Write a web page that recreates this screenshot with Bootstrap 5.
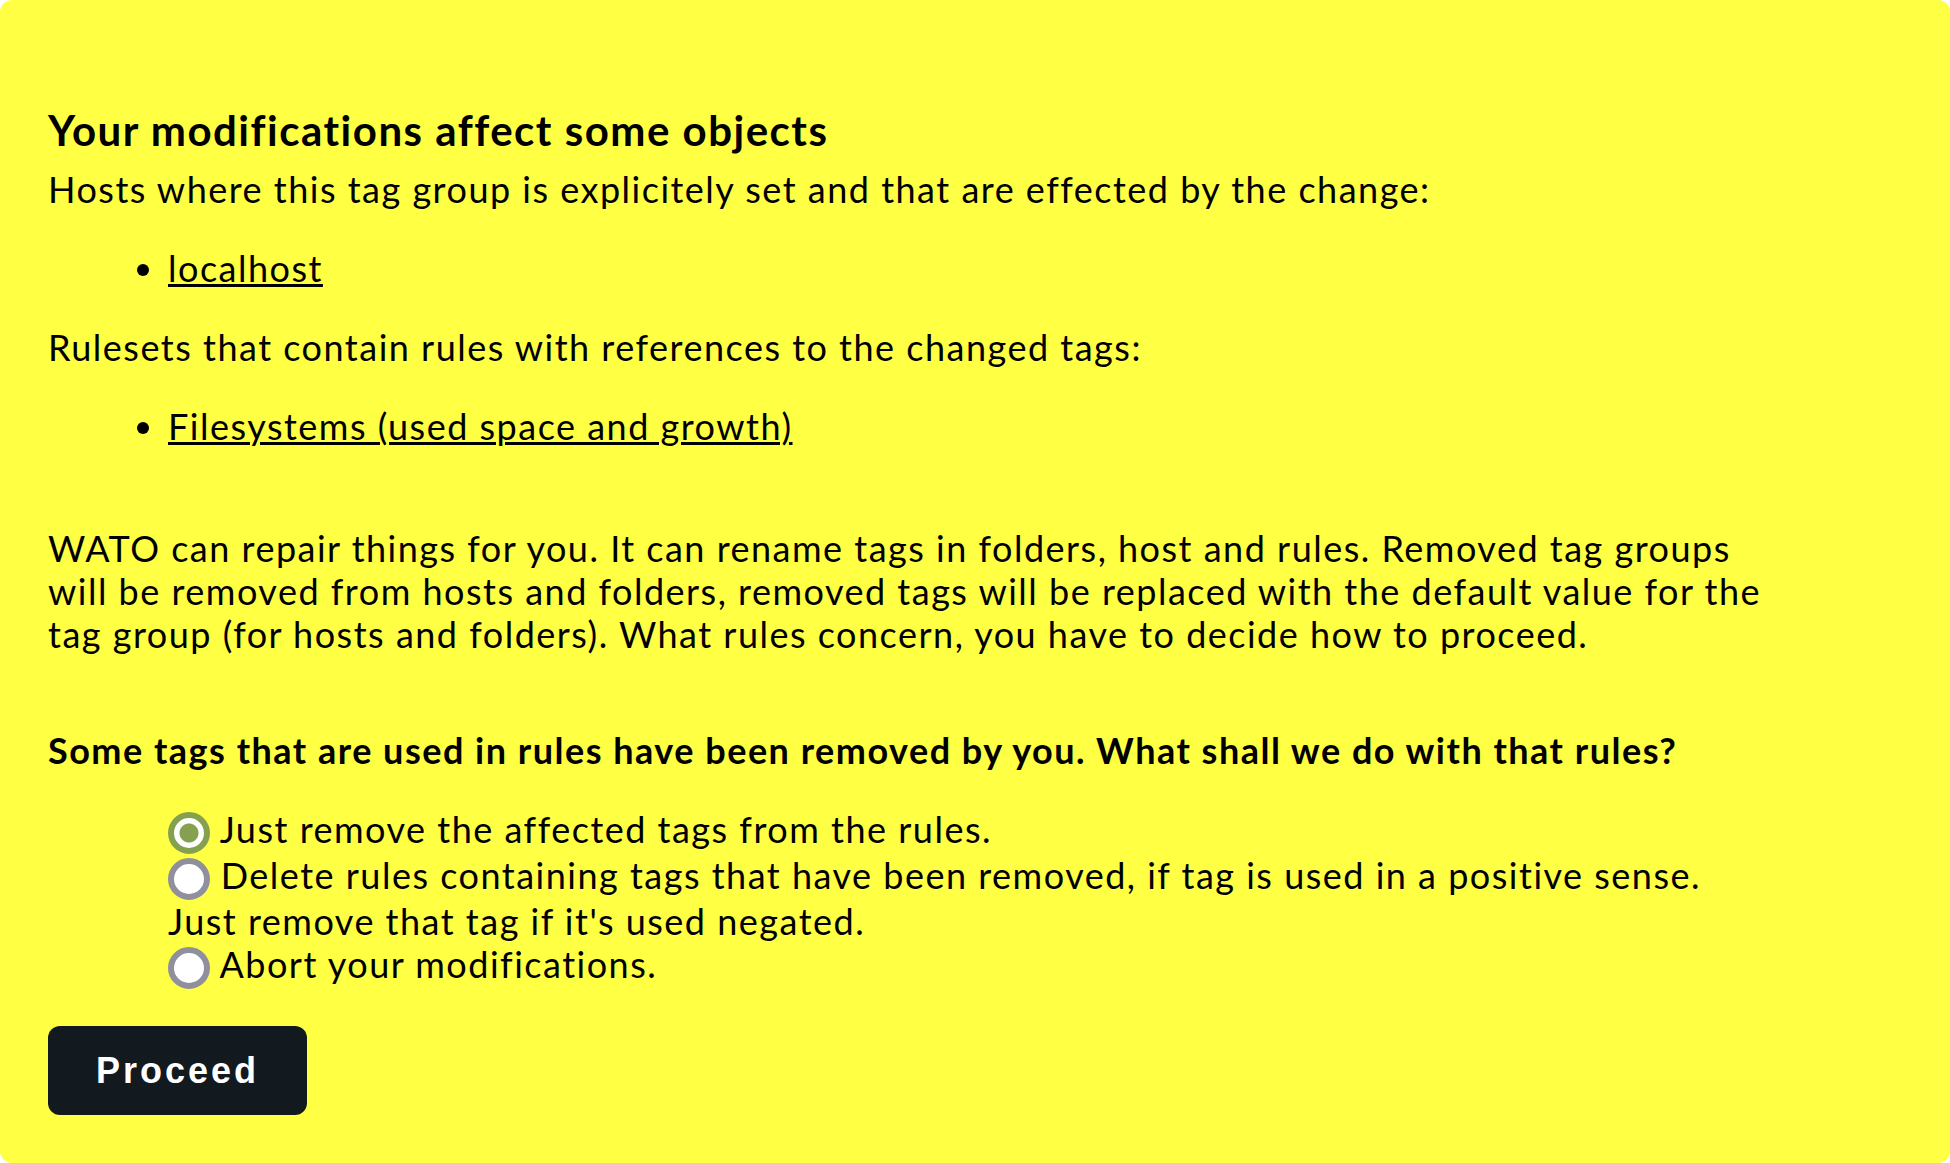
<!DOCTYPE html>
<html lang="en">
<head>
<meta charset="utf-8">
<meta name="viewport" content="width=device-width, initial-scale=1">
<title>Your modifications affect some objects</title>
<link rel="stylesheet" href="https://cdn.jsdelivr.net/npm/bootstrap@5.3.0/dist/css/bootstrap.min.css">
<style>
body { font-family: Lato, "Liberation Sans", sans-serif; font-size: 36px; line-height: 43px; letter-spacing: .0415em; color: #000; background: #fff; }
.notice { background: #ffff44; border-radius: 12px; padding: 106px 180px 48px 48px; min-height: 100vh; }
.notice h1 { font-size: 42px; line-height: 48px; font-weight: 700; margin: 0 0 14px; }
.notice p { margin: 0 0 36px; }
.notice ul { padding-left: 120px; margin: 0 0 36px; }
.notice .rulesets { margin-bottom: 79px; }
.notice .explanation { margin-bottom: 73px; }
.notice a { color: #000; text-decoration-thickness: 3px; }
.choices { padding-left: 120px; margin-bottom: 37px; }
.choices .form-check-input { float: none; width: 42px; height: 42px; margin: 0; vertical-align: -11px; border: 6px solid #8f8f9d; background: #fff; }
.choices .form-check-input:checked { border-color: #85a150; background: radial-gradient(circle, #85a150 9px, #fff 10px); }
.notice .btn-proceed { background: #12191f; color: #fff; font: 700 36px/41px "Liberation Sans", sans-serif; letter-spacing: 3px; padding: 24px 48px; border: 0; border-radius: 12px; }
</style>
</head>
<body>
<main class="notice">
<h1>Your modifications affect some objects</h1>
<p>Hosts where this tag group is explicitely set and that are effected by the change:</p>
<ul><li><a href="#localhost">localhost</a></li></ul>
<p>Rulesets that contain rules with references to the changed tags:</p>
<ul class="rulesets"><li><a href="#filesystems">Filesystems (used space and growth)</a></li></ul>
<p class="explanation">WATO can repair things for you. It can rename tags in folders, host and rules. Removed tag groups will be removed from hosts and folders, removed tags will be replaced with the default value for the tag group (for hosts and folders). What rules concern, you have to decide how to proceed.</p>
<form>
<p id="question" class="fw-bold">Some tags that are used in rules have been removed by you. What shall we do with that rules?</p>
<div class="choices" role="radiogroup" aria-labelledby="question">
<div><input class="form-check-input" type="radio" name="how" id="remove" checked> <label class="d-inline" for="remove">Just remove the affected tags from the rules.</label></div>
<div><input class="form-check-input" type="radio" name="how" id="delete"> <label class="d-inline" for="delete">Delete rules containing tags that have been removed, if tag is used in a positive sense. Just remove that tag if it's used negated.</label></div>
<div><input class="form-check-input" type="radio" name="how" id="abort"> <label class="d-inline" for="abort">Abort your modifications.</label></div>
</div>
<button type="button" class="btn btn-proceed">Proceed</button>
</form>
</main>
<script src="https://cdn.jsdelivr.net/npm/bootstrap@5.3.0/dist/js/bootstrap.bundle.min.js"></script>
</body>
</html>
